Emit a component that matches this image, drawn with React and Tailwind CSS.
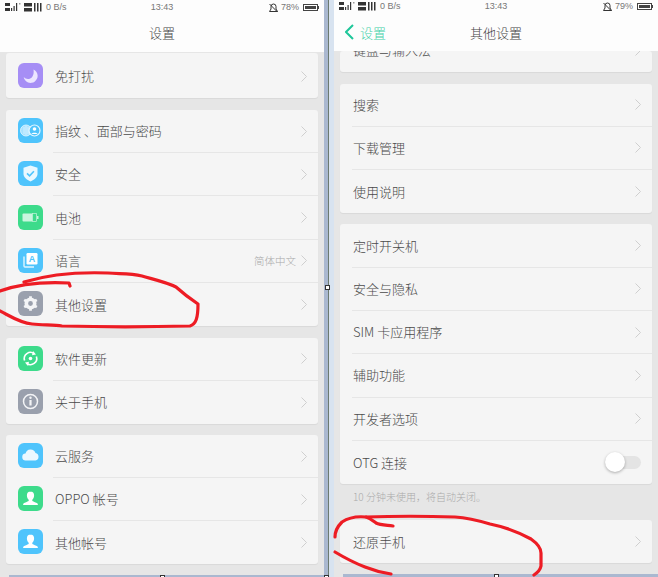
import React from 'react';

const CJK = '[font-family:"Noto_Sans_CJK_SC","Liberation_Sans",sans-serif]';

const Chevron = () => (
  <svg width="6" height="11" viewBox="0 0 6 11" fill="none" stroke="#cfcfcf" strokeWidth="1" className="shrink-0">
    <path d="M0.5 0.5 L5.5 5.5 L0.5 10.5" />
  </svg>
);

const AppIcon = ({ className, children }) => (
  <div className={`w-[25px] h-[25px] rounded-[6px] shrink-0 mb-[2px] flex items-center justify-center ${className}`}>
    <svg width="25" height="25" viewBox="0 0 25 25">{children}</svg>
  </div>
);

const person = (
  <>
    <path d="M12.5 5.5c-2.3 0-3.6 1.7-3.6 3.9 0 1.8.8 3.4 1.8 4.3v1.2c-1.4.9-3.8 1.4-5 2.4-.4.4-.6 1-.6 1.7h14.8c0-.7-.2-1.3-.6-1.7-1.2-1-3.6-1.5-5-2.4v-1.2c1-.9 1.8-2.5 1.8-4.3 0-2.2-1.3-3.9-3.6-3.9z" fill="#fff" />
  </>
);

const icons = {
  moon: (
    <AppIcon className="bg-[#a68ef5]">
      <path d="M15.5 6.5a7 7 0 1 1-9.8 7.5c1 1.3 2.6 2 4.3 2 3.6 0 6.4-3.6 5.5-9.5z" fill="#ece6ff" />
    </AppIcon>
  ),
  finger: (
    <AppIcon className="bg-[#4fc4fc]">
      <circle cx="8" cy="12.5" r="5.5" fill="#a9e2ff" stroke="#e6f7ff" strokeWidth="0.8" />
      <path d="M6 9v7M8 8v9M10 9v7" stroke="#e6f7ff" strokeWidth="0.7" />
      <circle cx="16.5" cy="12.5" r="5.5" fill="#4fc4fc" stroke="#e6f7ff" strokeWidth="1.2" />
      <circle cx="16.5" cy="11" r="1.8" fill="#fff" />
      <path d="M13.5 16c.6-1.7 5.4-1.7 6 0" fill="#fff" />
    </AppIcon>
  ),
  shield: (
    <AppIcon className="bg-[#4fc4fc]">
      <path d="M12.5 4.5l7 2.3v6c0 3.6-3.2 6-7 7.7-3.8-1.7-7-4.1-7-7.7v-6z" fill="#e9f8ff" />
      <path d="M9 12.3l2.6 2.5 4.3-4.5" fill="none" stroke="#4fc4fc" strokeWidth="1.6" />
    </AppIcon>
  ),
  battery: (
    <AppIcon className="bg-[#3ddb8b]">
      <rect x="4.5" y="8.5" width="14" height="8" rx="1" fill="#c9f5de" />
      <rect x="14.5" y="8.5" width="4" height="8" fill="#3ddb8b" stroke="#c9f5de" strokeWidth="0.6" />
      <rect x="19" y="11" width="1.5" height="3" fill="#c9f5de" />
    </AppIcon>
  ),
  language: (
    <AppIcon className="bg-[#4fc4fc]">
      <path d="M6 8.5v9.5a1 1 0 0 0 1 1h9" fill="none" stroke="#dff5ff" strokeWidth="1.4" />
      <rect x="8.5" y="5" width="11" height="11.5" rx="1.2" fill="#fff" />
      <text x="14" y="14.3" textAnchor="middle" fontSize="9" fontWeight="700" fill="#4fc4fc" fontFamily="Liberation Sans">A</text>
    </AppIcon>
  ),
  gear: (
    <AppIcon className="bg-[#9aa0ad]">
      <circle cx="12.5" cy="12.5" r="4.2" fill="none" stroke="#f3f4f6" strokeWidth="3.6" />
      <path d="M12.5 5.2v2.6M12.5 17.2v2.6M6.2 8.9l2.3 1.3M16.5 14.8l2.3 1.3M6.2 16.1l2.3-1.3M16.5 10.2l2.3-1.3" stroke="#f3f4f6" strokeWidth="2.8" />
    </AppIcon>
  ),
  update: (
    <AppIcon className="bg-[#3ddb8b]">
      <path d="M6.6 14.5a6.2 6.2 0 0 1 9.6-6.9" fill="none" stroke="#fff" strokeWidth="1.6" />
      <path d="M18.4 10.5a6.2 6.2 0 0 1-9.6 6.9" fill="none" stroke="#fff" strokeWidth="1.6" />
      <path d="M15 5l3 3.6-4 .6zM10 20l-3-3.6 4-.6z" fill="#fff" />
      <circle cx="12.5" cy="12.5" r="1.8" fill="#fff" />
    </AppIcon>
  ),
  info: (
    <AppIcon className="bg-[#9aa0ad]">
      <circle cx="12.5" cy="12.5" r="7" fill="none" stroke="#f3f4f6" strokeWidth="1.5" />
      <rect x="11.4" y="11" width="2.2" height="5.5" fill="#f3f4f6" />
      <circle cx="12.5" cy="8.8" r="1.2" fill="#f3f4f6" />
    </AppIcon>
  ),
  cloud: (
    <AppIcon className="bg-[#4fc4fc]">
      <path d="M8 17.5a3.5 3.5 0 0 1-.5-7 5.2 5.2 0 0 1 10-.6 3.9 3.9 0 0 1 0 7.6z" fill="#eaf8ff" />
    </AppIcon>
  ),
  personGreen: <AppIcon className="bg-[#3ddb8b]">{person}</AppIcon>,
  personBlue: <AppIcon className="bg-[#4fc4fc]">{person}</AppIcon>,
};

// left panel rows have an icon, right panel rows only text
const Row = ({ icon, label, value, last, size = 'h-[43.3px]', toggle }) => (
  <div className={`flex items-center pl-[12px] ${size}`}>
    {icon && <div className="mr-[10px] flex items-center">{icons[icon]}</div>}
    <div className={`flex-1 h-full flex items-center justify-between pr-[11px] ${icon ? 'pl-[2px]' : 'pl-[1px]'} ${last ? '' : 'border-b border-[#e6e6e6]'}`}>
      <span className="text-[13px] leading-none text-[#4a4a4a] font-light pb-[1px]">{label}</span>
      <div className="flex items-center gap-[5px]">
        {value && <span className="text-[10.5px] leading-none text-[#aaa] font-light">{value}</span>}
        {toggle ? (
          <div className="relative w-[36px] h-[13px] rounded-full bg-[#e4e4e4]">
            <div className="absolute left-0 top-[-4px] w-[20px] h-[20px] rounded-full bg-white shadow-[0_1px_3px_rgba(0,0,0,0.3)]" />
          </div>
        ) : (
          <Chevron />
        )}
      </div>
    </div>
  </div>
);

const Card = ({ className = '', children }) => (
  <div className={`mx-[6px] bg-[#f5f5f5] rounded-[3px] shadow-[0_1px_1px_rgba(0,0,0,0.06)] ${className}`}>{children}</div>
);

const StatusBar = ({ percent }) => (
  <div className="flex items-center justify-between h-[9px] pl-[5px] pr-[5px] text-[9px] leading-none text-[#777] font-['Liberation_Sans',sans-serif]">
    <div className="flex items-center flex-1">
      <svg width="38" height="9" viewBox="0 0 38 9" fill="#333">
        <rect x="0" y="0" width="5" height="3" />
        <rect x="0" y="5" width="5" height="3" />
        <rect x="6" y="5" width="1.2" height="3" />
        <rect x="8.5" y="3" width="1.2" height="5" />
        <rect x="11" y="0" width="1.2" height="8" />
        <rect x="14" y="0" width="1.5" height="1.5" fill="#999" />
        <rect x="19" y="0" width="8" height="3.5" />
        <rect x="19" y="5" width="8" height="3.5" />
        <rect x="29" y="0" width="1.5" height="8.5" />
        <rect x="32" y="0" width="1.5" height="8.5" />
        <rect x="35" y="0" width="1.5" height="8.5" />
      </svg>
      <span className="ml-[3px]">0 B/s</span>
    </div>
    <span className="flex-1 text-center">13:43</span>
    <div className="flex items-center justify-end flex-1 gap-[2px]">
      <svg width="11" height="10" viewBox="0 0 11 10" fill="none" stroke="#333" strokeWidth="1">
        <path d="M1.5 8.5h8L8 6V3.5a2.5 2.5 0 0 0-5 0V6zM1.5 1l8 8" />
      </svg>
      <span>{percent}</span>
      <div className="flex items-center ml-[2px]">
        <div className="w-[15px] h-[7px] bg-white border border-[#444] p-[1px] flex">
          <div className="w-[11px] bg-[#444]" />
        </div>
        <div className="w-[1px] h-[3px] bg-[#444]" />
      </div>
    </div>
  </div>
);

const LeftPanel = () => (
  <div className="w-[324px] h-full bg-[#e6e6e6] flex flex-col shrink-0">
    <div className="h-[52px] bg-[#fdfdfd] pt-[3px] shrink-0">
      <StatusBar percent="78%" />
      <div className="mt-[14px] text-center text-[13px] leading-none text-[#444] font-light">设置</div>
    </div>
    <Card className="mt-[1px]">
      <div className="h-[1.7px]" />
      <Row icon="moon" label="免打扰" last />
    </Card>
    <Card className="mt-[12px]">
      <Row icon="finger" label="指纹 、面部与密码" size="h-[43.25px]" />
      <Row icon="shield" label="安全" size="h-[43.25px]" />
      <Row icon="battery" label="电池" size="h-[43.25px]" />
      <Row icon="language" label="语言" value="简体中文" size="h-[43.25px]" />
      <Row icon="gear" label="其他设置" size="h-[43.25px]" last />
    </Card>
    <Card className="mt-[11.5px]">
      <Row icon="update" label="软件更新" size="h-[43px]" />
      <Row icon="info" label="关于手机" size="h-[43px]" last />
    </Card>
    <Card className="mt-[11.5px]">
      <Row icon="cloud" label="云服务" size="h-[43px]" />
      <Row icon="personGreen" label="OPPO 帐号" size="h-[43px]" />
      <Row icon="personBlue" label="其他帐号" size="h-[43px]" last />
    </Card>
    <div className="flex-1" />
    <div className="h-[2px] ml-[9px] bg-[#aab8d0]" />
  </div>
);

const RightPanel = () => (
  <div className="flex-1 h-full bg-[#e6e6e6] flex flex-col">
    <div className="h-[51px] bg-[#fdfdfd] pt-[2px] shrink-0 relative z-10">
      <StatusBar percent="79%" />
      <div className="relative mt-[14px] flex items-center justify-center h-[14px]">
        <div className="absolute left-[11px] top-[-1px] flex items-center gap-[6px]">
          <svg width="9" height="16" viewBox="0 0 9 16" fill="none" stroke="#1fc79a" strokeWidth="2">
            <path d="M8 1L1 8l7 7" />
          </svg>
          <span className="text-[13px] leading-none text-[#3fd0a8] font-light">设置</span>
        </div>
        <span className="text-[13px] leading-none text-[#444] font-light">其他设置</span>
      </div>
    </div>
    <Card className="h-[21px] overflow-hidden">
      <div className="-mt-[22.6px]">
        <Row label="键盘与输入法" last />
      </div>
    </Card>
    <Card className="mt-[11.5px]">
      <Row label="搜索" />
      <Row label="下载管理" />
      <Row label="使用说明" last />
    </Card>
    <Card className="mt-[11px]">
      <Row label="定时开关机" />
      <Row label="安全与隐私" />
      <Row label="SIM 卡应用程序" />
      <Row label="辅助功能" />
      <Row label="开发者选项" />
      <Row label="OTG 连接" last toggle />
    </Card>
    <div className="h-[36px] pl-[19px] pt-[8px] text-[10px] leading-[10px] text-[#aaa] font-light">10 分钟未使用，将自动关闭。</div>
    <Card>
      <Row label="还原手机" last />
    </Card>
    <div className="flex-1" />
    <div className="h-[3px] ml-[9px] bg-[#aab8d0]" />
  </div>
);

const Handle = ({ className }) => (
  <div className={`absolute bg-white border border-[#333] ${className}`} />
);

export default function App() {
  return (
    <div className={`relative w-[658px] h-[577px] overflow-hidden flex ${CJK}`}>
      <LeftPanel />
      <div className="w-[4px] h-full bg-[#aab8d0] shrink-0" />
      <div className="w-[1px] h-full bg-[#6c7a70] shrink-0" />
      <div className="w-[5px] h-full bg-[#d8e3f0] shrink-0" />
      <RightPanel />

      <Handle className="left-[325px] top-[285px] w-[5px] h-[5px]" />
      <Handle className="left-[160px] top-[575px] w-[5px] h-[5px]" />
      <Handle className="left-[324px] top-[575px] w-[5px] h-[5px]" />
      <Handle className="left-[494px] top-[574px] w-[5px] h-[5px]" />

      {/* red marker scribbles drawn over the screenshot */}
      <svg className="absolute inset-0 pointer-events-none" width="658" height="577" viewBox="0 0 658 577" fill="none" stroke="#ed1c24" strokeWidth="3.2" strokeLinecap="round" strokeLinejoin="round">
        <path d="M70 286 L69 283 C50 282 25 282 0 291" />
        <path d="M0 311 C10 316 20 323 32 324 C45 325 55 325 62 326 C100 327 150 327 190 326 C196 324 198 318 198 304 C192 300 186 296 176 287 C166 282 152 279 142 276 C130 273 120 274 108 273 C80 272 50 274 24 282" />
        <path d="M393 526 C385 525 380 525 376 523 C372 520 370 518 366 517 C356 516 348 518 342 522 C337 527 335 532 335 537" />
        <path d="M335 552 C345 558 352 562 365 567 C375 571 384 573 391 574" />
        <path d="M366 517 C395 516 425 516 455 517 C470 518 480 521 490 524 C505 527 520 533 531 539 C538 544 541 548 541 553 L541 566 C540 571 537 573 534 575" />
      </svg>
    </div>
  );
}
